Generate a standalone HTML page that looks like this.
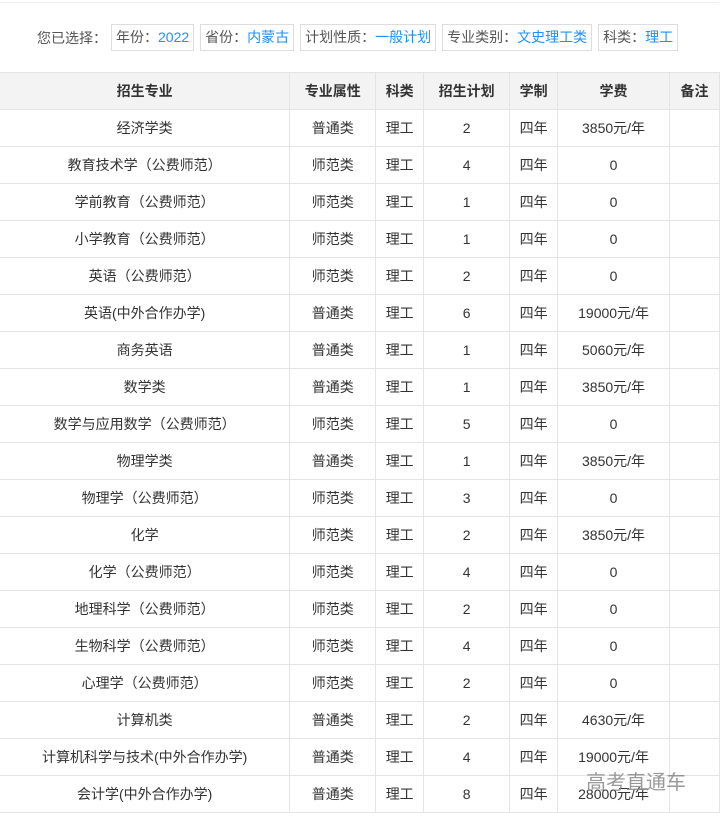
<!DOCTYPE html>
<html><head><meta charset="utf-8"><style>
*{margin:0;padding:0;box-sizing:border-box}
body{width:723px;height:819px;background:#fff;font-family:"Liberation Sans","Noto Sans CJK SC",sans-serif;font-size:14px;color:#333;position:relative;overflow:hidden}
.top{position:absolute;left:0;top:2px;width:719px;height:1px;background:#eee}
.sel{position:absolute;top:24px;left:37px;display:flex;align-items:center;font-size:14px;color:#555}
.sel .t{margin-right:4px}
.sel .b{border:1px solid #ddd;height:27px;line-height:25px;padding:0 4px;margin-right:6px;color:#555}
.sel .b span{color:#1e90ff}
table{position:absolute;left:0;top:72px;border-collapse:collapse;width:720px}
td,th{border:1px solid #e4e4e4;height:37px;text-align:center;font-weight:normal;color:#333}
th{background:#f3f3f3;font-weight:bold;color:#333}
table{border-left:none}
td:first-child,th:first-child{border-left:none}
.wm{position:absolute;left:586px;top:766px;font-size:20px;color:#888;opacity:.85}
</style></head><body>
<div class="top"></div>
<div class="sel"><span class="t">您已选择：</span>
<div class="b">年份：<span>2022</span></div>
<div class="b">省份：<span>内蒙古</span></div>
<div class="b">计划性质：<span>一般计划</span></div>
<div class="b">专业类别：<span>文史理工类</span></div>
<div class="b">科类：<span>理工</span></div></div>
<table>
<colgroup><col style="width:290px"><col style="width:86px"><col style="width:48px"><col style="width:86px"><col style="width:48px"><col style="width:112px"><col style="width:50px"></colgroup>
<tr><th>招生专业</th><th>专业属性</th><th>科类</th><th>招生计划</th><th>学制</th><th>学费</th><th>备注</th></tr>
<tr><td>经济学类</td><td>普通类</td><td>理工</td><td>2</td><td>四年</td><td>3850元/年</td><td></td></tr>
<tr><td>教育技术学（公费师范）</td><td>师范类</td><td>理工</td><td>4</td><td>四年</td><td>0</td><td></td></tr>
<tr><td>学前教育（公费师范）</td><td>师范类</td><td>理工</td><td>1</td><td>四年</td><td>0</td><td></td></tr>
<tr><td>小学教育（公费师范）</td><td>师范类</td><td>理工</td><td>1</td><td>四年</td><td>0</td><td></td></tr>
<tr><td>英语（公费师范）</td><td>师范类</td><td>理工</td><td>2</td><td>四年</td><td>0</td><td></td></tr>
<tr><td>英语(中外合作办学)</td><td>普通类</td><td>理工</td><td>6</td><td>四年</td><td>19000元/年</td><td></td></tr>
<tr><td>商务英语</td><td>普通类</td><td>理工</td><td>1</td><td>四年</td><td>5060元/年</td><td></td></tr>
<tr><td>数学类</td><td>普通类</td><td>理工</td><td>1</td><td>四年</td><td>3850元/年</td><td></td></tr>
<tr><td>数学与应用数学（公费师范）</td><td>师范类</td><td>理工</td><td>5</td><td>四年</td><td>0</td><td></td></tr>
<tr><td>物理学类</td><td>普通类</td><td>理工</td><td>1</td><td>四年</td><td>3850元/年</td><td></td></tr>
<tr><td>物理学（公费师范）</td><td>师范类</td><td>理工</td><td>3</td><td>四年</td><td>0</td><td></td></tr>
<tr><td>化学</td><td>师范类</td><td>理工</td><td>2</td><td>四年</td><td>3850元/年</td><td></td></tr>
<tr><td>化学（公费师范）</td><td>师范类</td><td>理工</td><td>4</td><td>四年</td><td>0</td><td></td></tr>
<tr><td>地理科学（公费师范）</td><td>师范类</td><td>理工</td><td>2</td><td>四年</td><td>0</td><td></td></tr>
<tr><td>生物科学（公费师范）</td><td>师范类</td><td>理工</td><td>4</td><td>四年</td><td>0</td><td></td></tr>
<tr><td>心理学（公费师范）</td><td>师范类</td><td>理工</td><td>2</td><td>四年</td><td>0</td><td></td></tr>
<tr><td>计算机类</td><td>普通类</td><td>理工</td><td>2</td><td>四年</td><td>4630元/年</td><td></td></tr>
<tr><td>计算机科学与技术(中外合作办学)</td><td>普通类</td><td>理工</td><td>4</td><td>四年</td><td>19000元/年</td><td></td></tr>
<tr><td>会计学(中外合作办学)</td><td>普通类</td><td>理工</td><td>8</td><td>四年</td><td>28000元/年</td><td></td></tr>
</table>
<div class="wm">高考直通车</div>
</body></html>
